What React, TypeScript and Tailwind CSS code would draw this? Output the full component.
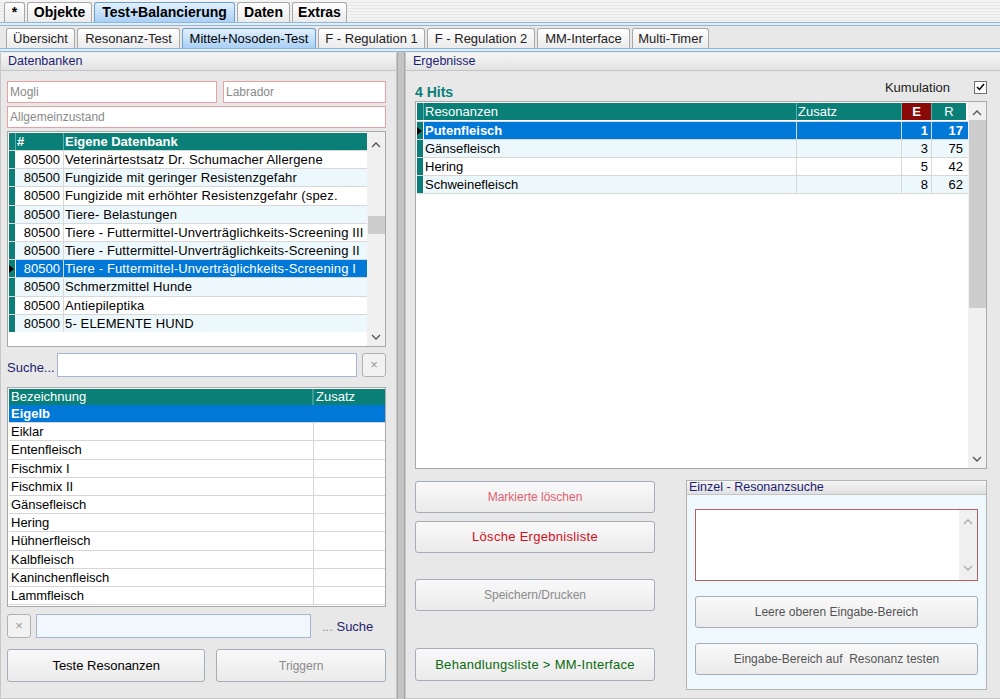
import React from 'react';

const teal = 'bg-[#0a7f78]';

const TopTabs = [
  { label: '*', w: 'w-[21px]' },
  { label: 'Objekte', w: 'w-[65px]' },
  { label: 'Test+Balancierung', w: 'w-[141px]', active: true },
  { label: 'Daten', w: 'w-[53px]' },
  { label: 'Extras', w: 'w-[55px]' },
];

const SubTabs = [
  { label: 'Übersicht', w: 'w-[69px]' },
  { label: 'Resonanz-Test', w: 'w-[103px]' },
  { label: 'Mittel+Nosoden-Test', w: 'w-[134px]', active: true },
  { label: 'F - Regulation 1', w: 'w-[107px]' },
  { label: 'F - Regulation 2', w: 'w-[108px]' },
  { label: 'MM-Interface', w: 'w-[93px]' },
  { label: 'Multi-Timer', w: 'w-[77px]' },
];

const databases = [
  'Veterinärtestsatz Dr. Schumacher Allergene',
  'Fungizide mit geringer Resistenzgefahr',
  'Fungizide mit erhöhter Resistenzgefahr (spez.',
  'Tiere- Belastungen',
  'Tiere - Futtermittel-Unverträglichkeits-Screening III',
  'Tiere - Futtermittel-Unverträglichkeits-Screening II',
  'Tiere - Futtermittel-Unverträglichkeits-Screening I',
  'Schmerzmittel Hunde',
  'Antiepileptika',
  '5- ELEMENTE HUND',
];

const items = [
  'Eigelb',
  'Eiklar',
  'Entenfleisch',
  'Fischmix I',
  'Fischmix II',
  'Gänsefleisch',
  'Hering',
  'Hühnerfleisch',
  'Kalbfleisch',
  'Kaninchenfleisch',
  'Lammfleisch',
];

const hits = [
  { name: 'Putenfleisch', e: 1, r: 17 },
  { name: 'Gänsefleisch', e: 3, r: 75 },
  { name: 'Hering', e: 5, r: 42 },
  { name: 'Schweinefleisch', e: 8, r: 62 },
];

const Chevron = ({ up, className = '' }: { up?: boolean; className?: string }) => (
  <svg width="10" height="7" viewBox="0 0 10 7" className={className}>
    <path d={up ? 'M1 6 L5 2 L9 6' : 'M1 1 L5 5 L9 1'} fill="none" stroke="currentColor" strokeWidth="1.3" />
  </svg>
);

const Arrow = () => (
  <svg width="5" height="8" viewBox="0 0 5 8">
    <path d="M0 0 L5 4 L0 8 Z" fill="#000" />
  </svg>
);

const BlueRule = () => (
  <div className="h-[4px] bg-[#e4eef8] border-y border-[#8db6e2]" />
);

const Btn = ({ children, className = '' }: { children: React.ReactNode; className?: string }) => (
  <button
    className={`flex items-center justify-center rounded-[3px] border border-[#a4adb8] bg-gradient-to-b from-[#f9f9f9] to-[#ebebeb] text-[12px] ${className}`}
  >
    {children}
  </button>
);

const PanelHeader = ({ title }: { title: string }) => (
  <div className="h-[18px] flex items-center px-[7px] border-b border-[#c4c4c4] bg-gradient-to-b from-[#f6f6f6] to-[#e2e2e2] text-[12.5px] text-[#1c1c72]">
    {title}
  </div>
);

export default function App() {
  return (
    <div className="w-[1000px] h-[699px] overflow-hidden bg-[#e8e8e8] font-['Liberation_Sans',Arial,sans-serif] text-black select-none">
      {/* Main tabs */}
      <div className="h-[22px] flex items-end gap-[2px] pl-[4px] bg-[repeating-linear-gradient(to_bottom,#f4f4f4_0px,#f4f4f4_2px,#e6e6e6_2px,#e6e6e6_3px)]">
        {TopTabs.map(t => (
          <div
            key={t.label}
            className={`${t.w} h-[20px] flex items-center justify-center rounded-t-[3px] border border-b-0 text-[14px] font-bold ${
              t.active
                ? 'border-[#6a9fd4] bg-gradient-to-b from-[#e2f0fd] to-[#a9d0f5]'
                : 'border-[#a8a8a8] bg-gradient-to-b from-[#ffffff] to-[#ebebeb]'
            }`}
          >
            {t.label}
          </div>
        ))}
      </div>
      <BlueRule />

      {/* Sub tabs */}
      <div className="h-[22px] flex items-end gap-[2px] pl-[6px] bg-[#e8e8e8]">
        {SubTabs.map(t => (
          <div
            key={t.label}
            className={`${t.w} h-[20px] flex items-center justify-center rounded-t-[3px] border border-b-0 text-[13px] ${
              t.active
                ? 'border-[#6a9fd4] bg-gradient-to-b from-[#e2f0fd] to-[#a9d0f5]'
                : 'border-[#a8a8a8] bg-gradient-to-b from-[#ffffff] to-[#ebebeb] text-[#222]'
            }`}
          >
            {t.label}
          </div>
        ))}
      </div>
      <BlueRule />

      <div className="flex h-[647px]">
        {/* Left panel */}
        <div className="w-[397px] shrink-0 flex flex-col border border-[#c6c6c6] border-t-0 mt-[1px]">
          <PanelHeader title="Datenbanken" />
          <div className="flex flex-col px-[6px] pr-[10px]">
            <div className="flex gap-[6px] mt-[10px]">
              <div className="w-[210px] h-[22px] bg-white border border-[#e7a0a4] px-[2px] text-[12px] leading-[20px] text-[#8a8a8a]">Mogli</div>
              <div className="flex-1 h-[22px] bg-white border border-[#e7a0a4] px-[2px] text-[12px] leading-[20px] text-[#8a8a8a]">Labrador</div>
            </div>
            <div className="h-[22px] mt-[3px] bg-white border border-[#e7a0a4] px-[2px] text-[12px] leading-[20px] text-[#8a8a8a]">Allgemeinzustand</div>

            {/* Database grid */}
            <div className="h-[216px] mt-[3px] bg-white border border-[#a9a9a9] flex">
              <div className="flex-1 flex flex-col pl-[1px] pt-[1px]">
                <div className={`h-[17px] flex ${teal} text-white font-bold text-[13px] leading-[17px]`}>
                  <div className="w-[7px] border-r border-[#5fb0aa]" />
                  <div className="w-[48px] border-r border-[#5fb0aa] pl-[1px]">#</div>
                  <div className="flex-1 pl-[1px]">Eigene Datenbank</div>
                </div>
                {databases.map((d, i) => {
                  const sel = i === 6;
                  return (
                    <div
                      key={d}
                      className={`h-[18.2px] flex text-[13px] border-t border-[#d8d8d8] ${
                        sel ? 'bg-[#0078d7] text-white' : i % 2 ? 'bg-[#edf8fc]' : 'bg-white'
                      }`}
                    >
                      <div className="w-[7px] bg-[#0a7f78] border-r border-white flex items-center">{sel && <Arrow />}</div>
                      <div className="w-[48px] text-right pr-[3px] border-r border-[#d8d8d8] leading-[17px]">80500</div>
                      <div className="flex-1 pl-[1px] leading-[17px] whitespace-nowrap overflow-hidden tracking-[0.15px]">{d}</div>
                    </div>
                  );
                })}
              </div>
              <div className="w-[18px] flex flex-col items-center bg-[#f0f0f0]">
                <Chevron up className="mt-[9px] text-[#555]" />
                <div className="w-[17px] h-[18px] bg-[#cdcdcd] mt-[68px]" />
                <div className="flex-1" />
                <Chevron className="mb-[5px] text-[#555]" />
              </div>
            </div>

            {/* Search */}
            <div className="flex items-center mt-[6px] h-[24px]">
              <span className="text-[13px] text-[#24246e] w-[50px] mt-[6px]">Suche...</span>
              <div className="w-[300px] h-[24px] bg-white border border-[#a8b4d0]" />
              <div className="w-[24px] h-[24px] ml-[5px] border border-[#b0b0b0] rounded-[3px] bg-[#f2f2f2] flex items-center justify-center text-[#999] text-[13px]">×</div>
            </div>

            {/* Items grid */}
            <div className="h-[220px] mt-[10px] bg-white border border-[#a9a9a9] pl-[1px] pt-[1px]">
              <div className={`h-[16px] flex ${teal} text-white text-[13px] leading-[16px]`}>
                <div className="w-[305px] pl-[2px] border-r-2 border-[#3c9c96]">Bezeichnung</div>
                <div className="flex-1 pl-[2px]">Zusatz</div>
              </div>
              {items.map((it, i) => {
                const sel = i === 0;
                return (
                  <div
                    key={it}
                    className={`h-[18.2px] flex text-[13px] leading-[17px] border-b border-[#d6d6d6] ${
                      sel ? 'bg-[#0078d7] text-white font-bold' : 'bg-white'
                    }`}
                  >
                    <div className={`w-[305px] pl-[2px] border-r ${sel ? 'border-[#0078d7]' : 'border-[#d6d6d6]'}`}>{it}</div>
                    <div className="flex-1" />
                  </div>
                );
              })}
            </div>

            {/* Bottom search */}
            <div className="flex items-center mt-[7px] h-[24px]">
              <div className="w-[24px] h-[24px] border border-[#b0b0b0] rounded-[3px] bg-[#f2f2f2] flex items-center justify-center text-[#999] text-[13px]">×</div>
              <div className="w-[275px] h-[24px] ml-[5px] bg-[#f0f8fe] border border-[#a8b4d0]" />
              <span className="ml-[11px] text-[13px] text-[#24246e] mt-[2px]">
                <span className="text-[#8888aa]">...</span> Suche
              </span>
            </div>

            <div className="flex mt-[11px] gap-[11px]">
              <Btn className="w-[199px] h-[33px] text-[13px]">Teste Resonanzen</Btn>
              <Btn className="w-[170px] h-[33px] text-[#8a8a8a]">Triggern</Btn>
            </div>
          </div>
        </div>

        {/* Splitter */}
        <div className="w-[8px] shrink-0 bg-[#c4c4c4] border-x border-[#a8a8a8]" />

        {/* Right panel */}
        <div className="flex-1 flex flex-col border border-[#c6c6c6] border-t-0 mt-[1px]">
          <PanelHeader title="Ergebnisse" />
          <div className="flex flex-col pl-[9px] pr-[13px]">
            <div className="h-[30px] flex items-end justify-between pb-[1px]">
              <span className="text-[#0a7f78] font-bold text-[14px] leading-[16px]">4 Hits</span>
              <div className="flex items-center mb-[3px]">
                <span className="text-[13px] text-[#222] mr-[24px]">Kumulation</span>
                <div className="w-[13px] h-[13px] bg-white border border-[#707070] flex items-center justify-center">
                  <svg width="9" height="8" viewBox="0 0 9 8">
                    <path d="M1 4 L3.5 6.5 L8 1" fill="none" stroke="#000" strokeWidth="1.5" />
                  </svg>
                </div>
              </div>
            </div>

            {/* Results grid */}
            <div className="h-[368px] bg-white border border-[#a9a9a9] flex">
              <div className="flex-1 flex flex-col pl-[1px] pt-[1px]">
                <div className="h-[17px] flex text-white text-[13px] leading-[17px]">
                  <div className={`w-[7px] ${teal} border-r border-[#5fb0aa]`} />
                  <div className={`w-[373px] ${teal} pl-[1px] border-r border-[#5fb0aa]`}>Resonanzen</div>
                  <div className={`w-[105px] ${teal} pl-[1px] border-r border-[#5fb0aa]`}>Zusatz</div>
                  <div className="w-[30px] bg-[#8a0a0a] font-bold text-center border-r border-[#5fb0aa]">E</div>
                  <div className={`w-[34px] ${teal} text-center`}>R</div>
                </div>
                {hits.map((h, i) => {
                  const sel = i === 0;
                  return (
                    <div
                      key={h.name}
                      className={`h-[18px] flex text-[13px] leading-[17px] border-t border-[#d8d8d8] ${
                        sel ? 'bg-[#0078d7] text-white font-bold' : i % 2 ? 'bg-[#edf8fc]' : 'bg-white'
                      } ${i === 0 ? 'mt-[1px]' : ''}`}
                    >
                      <div className="w-[7px] bg-[#0a7f78] border-r border-white flex items-center">{sel && <Arrow />}</div>
                      <div className="w-[373px] pl-[1px] border-r border-[#d8d8d8]">{h.name}</div>
                      <div className="w-[105px] border-r border-[#d8d8d8]" />
                      <div className="w-[30px] text-right pr-[3px] border-r border-[#d8d8d8]">{h.e}</div>
                      <div className="w-[34px] text-right pr-[3px]">{h.r}</div>
                    </div>
                  );
                })}
                <div className="w-[551px] border-t border-[#d8d8d8]" />
              </div>
              <div className="w-[18px] flex flex-col items-center bg-[#f0f0f0]">
                <Chevron up className="mt-[7px] text-[#555]" />
                <div className="w-[17px] h-[188px] bg-[#cdcdcd] mt-[4px]" />
                <div className="flex-1" />
                <Chevron className="mb-[5px] text-[#555]" />
              </div>
            </div>

            <div className="flex mt-[11px]">
              <div className="w-[240px] flex flex-col">
                <Btn className="h-[32px] mt-[1px] border-[#8cc4e2] from-[#f4f8f8] to-[#e8eeee] text-[#e06070]">Markierte löschen</Btn>
                <Btn className="h-[32px] mt-[8px] text-[#d0101c] text-[13px] tracking-[0.3px]">Lösche Ergebnisliste</Btn>
                <Btn className="h-[32px] mt-[26px] text-[#8a8a8a]">Speichern/Drucken</Btn>
                <Btn className="h-[33px] mt-[37px] text-[#0a6a10] text-[13px] tracking-[0.3px]">Behandlungsliste &gt; MM-Interface</Btn>
              </div>

              {/* Einzel - Resonanzsuche */}
              <div className="w-[301px] h-[210px] ml-[31px] border border-[#b4b4b4] flex flex-col bg-[#eff8fc]">
                <div className="h-[14px] flex items-center px-[2px] border-b border-[#c4c4c4] bg-gradient-to-b from-[#f6f6f6] to-[#e0e0e0] text-[12.5px] text-[#1c1c72]">
                  Einzel - Resonanzsuche
                </div>
                <div className="mx-[8px] mt-[14px] h-[72px] bg-white border border-[#b06060] flex">
                  <div className="flex-1" />
                  <div className="w-[18px] bg-[#f0f0f0] flex flex-col items-center justify-between py-[8px] text-[#aaa]">
                    <Chevron up />
                    <Chevron />
                  </div>
                </div>
                <Btn className="mx-[8px] mt-[15px] h-[32px] text-[#555]">Leere oberen Eingabe-Bereich</Btn>
                <Btn className="mx-[8px] mt-[15px] h-[32px] text-[#555]">Eingabe-Bereich auf&nbsp; Resonanz testen</Btn>
              </div>
            </div>
          </div>
        </div>
      </div>
    </div>
  );
}
